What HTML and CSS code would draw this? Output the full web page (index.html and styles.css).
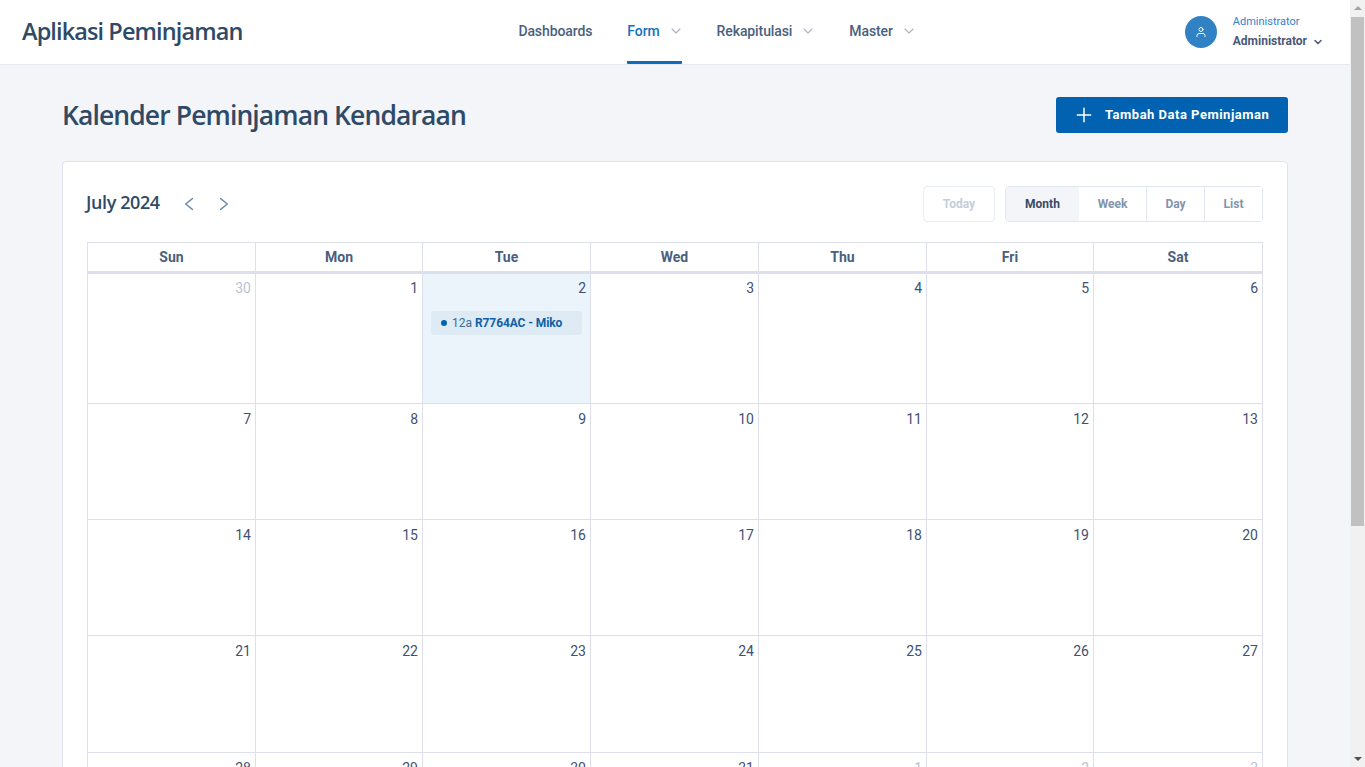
FILE: index.html
```html
<!DOCTYPE html>
<html lang="en">
<head>
    <meta charset="UTF-8">
    <meta name="viewport" content="width=device-width, initial-scale=1.0">
    <title>Kalender Peminjaman Kendaraan</title>
    <link rel="stylesheet" href="styles.css">
</head>
<body>
    <div class="page">
        <header class="topbar">
            <div class="brand">Aplikasi Peminjaman</div>
            <nav class="menu">
                <a class="menu-item">Dashboards</a>
                <a class="menu-item active">Form
                    <svg class="chev" viewBox="0 0 24 24"><path d="M6 9l6 6 6-6"/></svg>
                </a>
                <a class="menu-item">Rekapitulasi
                    <svg class="chev" viewBox="0 0 24 24"><path d="M6 9l6 6 6-6"/></svg>
                </a>
                <a class="menu-item">Master
                    <svg class="chev" viewBox="0 0 24 24"><path d="M6 9l6 6 6-6"/></svg>
                </a>
            </nav>
            <div class="user">
                <div class="avatar">
                    <svg viewBox="0 0 24 24"><path d="M20 21v-2a4 4 0 0 0-4-4H8a4 4 0 0 0-4 4v2"/><circle cx="12" cy="7" r="4"/></svg>
                </div>
                <div class="user-text">
                    <div class="user-role">Administrator</div>
                    <div class="user-name">Administrator
                        <svg viewBox="0 0 24 24"><path d="M6 9l6 6 6-6"/></svg>
                    </div>
                </div>
            </div>
        </header>

        <main class="content">
            <div class="page-head">
                <h1>Kalender Peminjaman Kendaraan</h1>
                <button class="btn-add">
                    <svg viewBox="0 0 24 24"><path d="M12 4v16M4 12h16"/></svg>
                    Tambah Data Peminjaman
                </button>
            </div>

            <section class="card">
                <div class="toolbar">
                    <div class="toolbar-left">
                        <h2>July 2024</h2>
                        <svg class="nav-arrow" viewBox="0 0 24 24"><path d="M16 5.5L8 12l8 6.5"/></svg>
                        <svg class="nav-arrow" viewBox="0 0 24 24"><path d="M8 5.5l8 6.5-8 6.5"/></svg>
                    </div>
                    <div class="toolbar-right">
                        <button class="btn-today">Today</button>
                        <div class="view-group">
                            <button class="selected">Month</button>
                            <button>Week</button>
                            <button>Day</button>
                            <button>List</button>
                        </div>
                    </div>
                </div>

                <table class="calendar">
                    <thead>
                        <tr><th>Sun</th><th>Mon</th><th>Tue</th><th>Wed</th><th>Thu</th><th>Fri</th><th>Sat</th></tr>
                    </thead>
                    <tbody>
                        <tr class="first-week">
                            <td class="muted">30</td><td>1</td>
                            <td class="today">2
                                <div class="event"><span class="dot"></span>12a <b>R7764AC - Miko</b></div>
                            </td>
                            <td>3</td><td>4</td><td>5</td><td>6</td>
                        </tr>
                        <tr><td>7</td><td>8</td><td>9</td><td>10</td><td>11</td><td>12</td><td>13</td></tr>
                        <tr><td>14</td><td>15</td><td>16</td><td>17</td><td>18</td><td>19</td><td>20</td></tr>
                        <tr class="tall-week"><td>21</td><td>22</td><td>23</td><td>24</td><td>25</td><td>26</td><td>27</td></tr>
                        <tr><td>28</td><td>29</td><td>30</td><td>31</td><td class="muted">1</td><td class="muted">2</td><td class="muted">3</td></tr>
                    </tbody>
                </table>
            </section>
        </main>
    </div>

    <div class="scrollbar">
        <span class="arrow-up"></span>
        <div class="thumb"></div>
        <span class="arrow-down"></span>
    </div>
</body>
</html>
```

FILE: styles.css
```css
body {
    display: flex;
    height: 100vh;
    margin: 0;
    overflow: hidden;
    background: #f3f5f9;
    font-family: Roboto, 'Liberation Sans', sans-serif;
    font-size: 14px;
    color: #3f5170;
}
svg {
    fill: none;
    stroke: currentColor;
    stroke-linecap: round;
    stroke-linejoin: round;
}
button {
    font-family: inherit;
    cursor: pointer;
}
.page {
    flex: 1;
    min-width: 0;
    overflow: hidden;
}

/* scrollbar, drawn because the page is cut at the window */
.scrollbar {
    display: flex;
    flex-direction: column;
    align-items: center;
    width: 15px;
    height: 767px;
    background: #f1f1f1;
}
.arrow-up,
.arrow-down {
    width: 0;
    height: 0;
    margin: 6px 0 5px;
    border-left: 4px solid transparent;
    border-right: 4px solid transparent;
}
.arrow-up {
    border-bottom: 4px solid #a3a3a3;
}
.arrow-down {
    margin: auto 0 6px;
    border-top: 4px solid #505050;
}
.thumb {
    width: 13px;
    height: 509px;
    margin-top: 2px;
    background: #c1c1c1;
}

/* top bar */
.topbar {
    display: flex;
    align-items: center;
    justify-content: space-between;
    height: 64px;
    padding: 0 26px 0 22px;
    background: #fff;
    border-bottom: 1px solid #e4e9f2;
}
.brand {
    padding-bottom: 2px;
    margin-right: 6px;
    font-family: 'Open Sans', sans-serif;
    font-size: 23.5px;
    font-weight: 600;
    letter-spacing: -0.9px;
    color: #2f4a66;
}
.menu {
    display: flex;
    gap: 35px;
    align-self: stretch;
}
.menu-item {
    display: flex;
    align-items: center;
    gap: 8px;
    height: 60px;
    padding-top: 1px;
    font-weight: 500;
    letter-spacing: -0.1px;
    color: #4a5f7e;
    border-bottom: 3px solid transparent;
}
.menu-item.active {
    color: #0f72c2;
    border-bottom-color: #0f6cbd;
    border-radius: 0 0 1px 1px;
}
.chev {
    width: 16px;
    height: 16px;
    margin-right: -2px;
    stroke: #a9b5c5;
    stroke-width: 1.7;
}
.user {
    display: flex;
    align-items: center;
    gap: 16px;
}
.avatar {
    display: flex;
    align-items: center;
    justify-content: center;
    width: 32px;
    height: 32px;
    border-radius: 50%;
    background: #3182c4;
    color: #fff;
}
.avatar svg {
    width: 12px;
    height: 12px;
    stroke-width: 2;
}
.user-role {
    font-size: 11px;
    line-height: 14px;
    color: #3182ce;
    margin-bottom: 4px;
}
.user-name {
    font-size: 12px;
    line-height: 16px;
    font-weight: 700;
    color: #4a5878;
}
.user-name svg {
    width: 12px;
    height: 12px;
    stroke-width: 3;
    vertical-align: -3px;
    margin-left: 2px;
}

/* page */
.content {
    padding: 32px 62px 0;
}
.page-head {
    display: flex;
    align-items: center;
    justify-content: space-between;
    margin-bottom: 28px;
}
h1 {
    margin: 0;
    font-family: 'Open Sans', sans-serif;
    font-size: 26.5px;
    line-height: 36px;
    font-weight: 600;
    letter-spacing: -0.9px;
    color: #2f4a66;
}
.btn-add {
    display: flex;
    align-items: center;
    gap: 11px;
    width: 232px;
    height: 36px;
    padding: 0 0 1px 18px;
    border: none;
    border-radius: 3px;
    background: #0062b1;
    color: #fff;
    font-size: 13px;
    font-weight: 700;
    letter-spacing: 0.5px;
}
.btn-add svg {
    width: 20px;
    height: 20px;
    stroke-width: 1.8;
}

/* card and toolbar */
.card {
    padding: 24px;
    background: #fff;
    border: 1px solid #dfe3ee;
    border-radius: 4px;
}
.toolbar {
    display: flex;
    align-items: center;
    justify-content: space-between;
    margin-bottom: 20px;
}
.toolbar-left {
    display: flex;
    align-items: center;
    gap: 15px;
}
.toolbar-left h2 {
    margin: 0 4px 4px -1px;
    font-family: 'Open Sans', sans-serif;
    font-size: 18px;
    line-height: 24px;
    font-weight: 600;
    letter-spacing: -0.4px;
    color: #2f4a66;
}
.nav-arrow {
    width: 20px;
    height: 20px;
    stroke: #6c8eaf;
    stroke-width: 1.8;
}
.toolbar-right {
    display: flex;
    gap: 10px;
}
.btn-today {
    width: 72px;
    height: 36px;
    padding: 0;
    background: #fff;
    border: 1px solid #e8ecf3;
    border-radius: 4px;
    color: #c3cedb;
    font-size: 12px;
    font-weight: 700;
}
.view-group {
    display: flex;
    height: 36px;
    border: 1px solid #e2e6f0;
    border-radius: 4px;
    box-sizing: border-box;
}
.view-group button {
    height: 34px;
    padding: 0;
    background: #fff;
    border: none;
    border-right: 1px solid #e2e6f0;
    color: #8295ab;
    font-size: 12px;
    font-weight: 700;
}
.view-group button:nth-child(2) {
    width: 68px;
}
.view-group button:nth-child(3) {
    width: 58px;
}
.view-group button:last-child {
    width: 57px;
    border-right: none;
    border-radius: 0 3px 3px 0;
}
.view-group .selected {
    width: 73px;
    background: #f3f5f9;
    border-right: none;
    border-radius: 3px 0 0 3px;
    color: #3a4a66;
}

/* calendar */
.calendar {
    width: 1175px;
    table-layout: fixed;
    border-collapse: collapse;
}
.calendar th,
.calendar td {
    box-sizing: border-box;
    border: 1px solid #dde0ec;
}
.calendar th {
    width: 168px;
    height: 30px;
    padding: 0 0 1px;
    border-bottom-width: 3px;
    font-size: 14px;
    font-weight: 700;
    color: #4a5f7e;
}
.calendar th:nth-child(2),
.calendar th:nth-child(6) {
    width: 167px;
}
.calendar th:last-child {
    width: 169px;
}
.calendar td {
    height: 116px;
    padding: 5px 4px 0 0;
    vertical-align: top;
    text-align: right;
    line-height: 20px;
    color: #3f5170;
}
.calendar .first-week td {
    height: 131px;
    padding-top: 4px;
}
.tall-week td {
    height: 117px;
}
.calendar td.muted {
    color: #b7c2d3;
}
.calendar td.today {
    background: #ebf3fb;
}
.event {
    display: flex;
    align-items: center;
    box-sizing: border-box;
    height: 24px;
    margin: 13px 4px 0 8px;
    padding: 0 0 1px 10px;
    background: #deebf5;
    border-radius: 3px;
    font-size: 12px;
    text-align: left;
    color: #3b6a96;
    white-space: pre;
}
.event b {
    color: #0f5fa8;
    font-weight: 700;
    letter-spacing: -0.1px;
}
.dot {
    width: 6px;
    height: 6px;
    margin-right: 5px;
    border-radius: 50%;
    background: #0062b1;
}
```
